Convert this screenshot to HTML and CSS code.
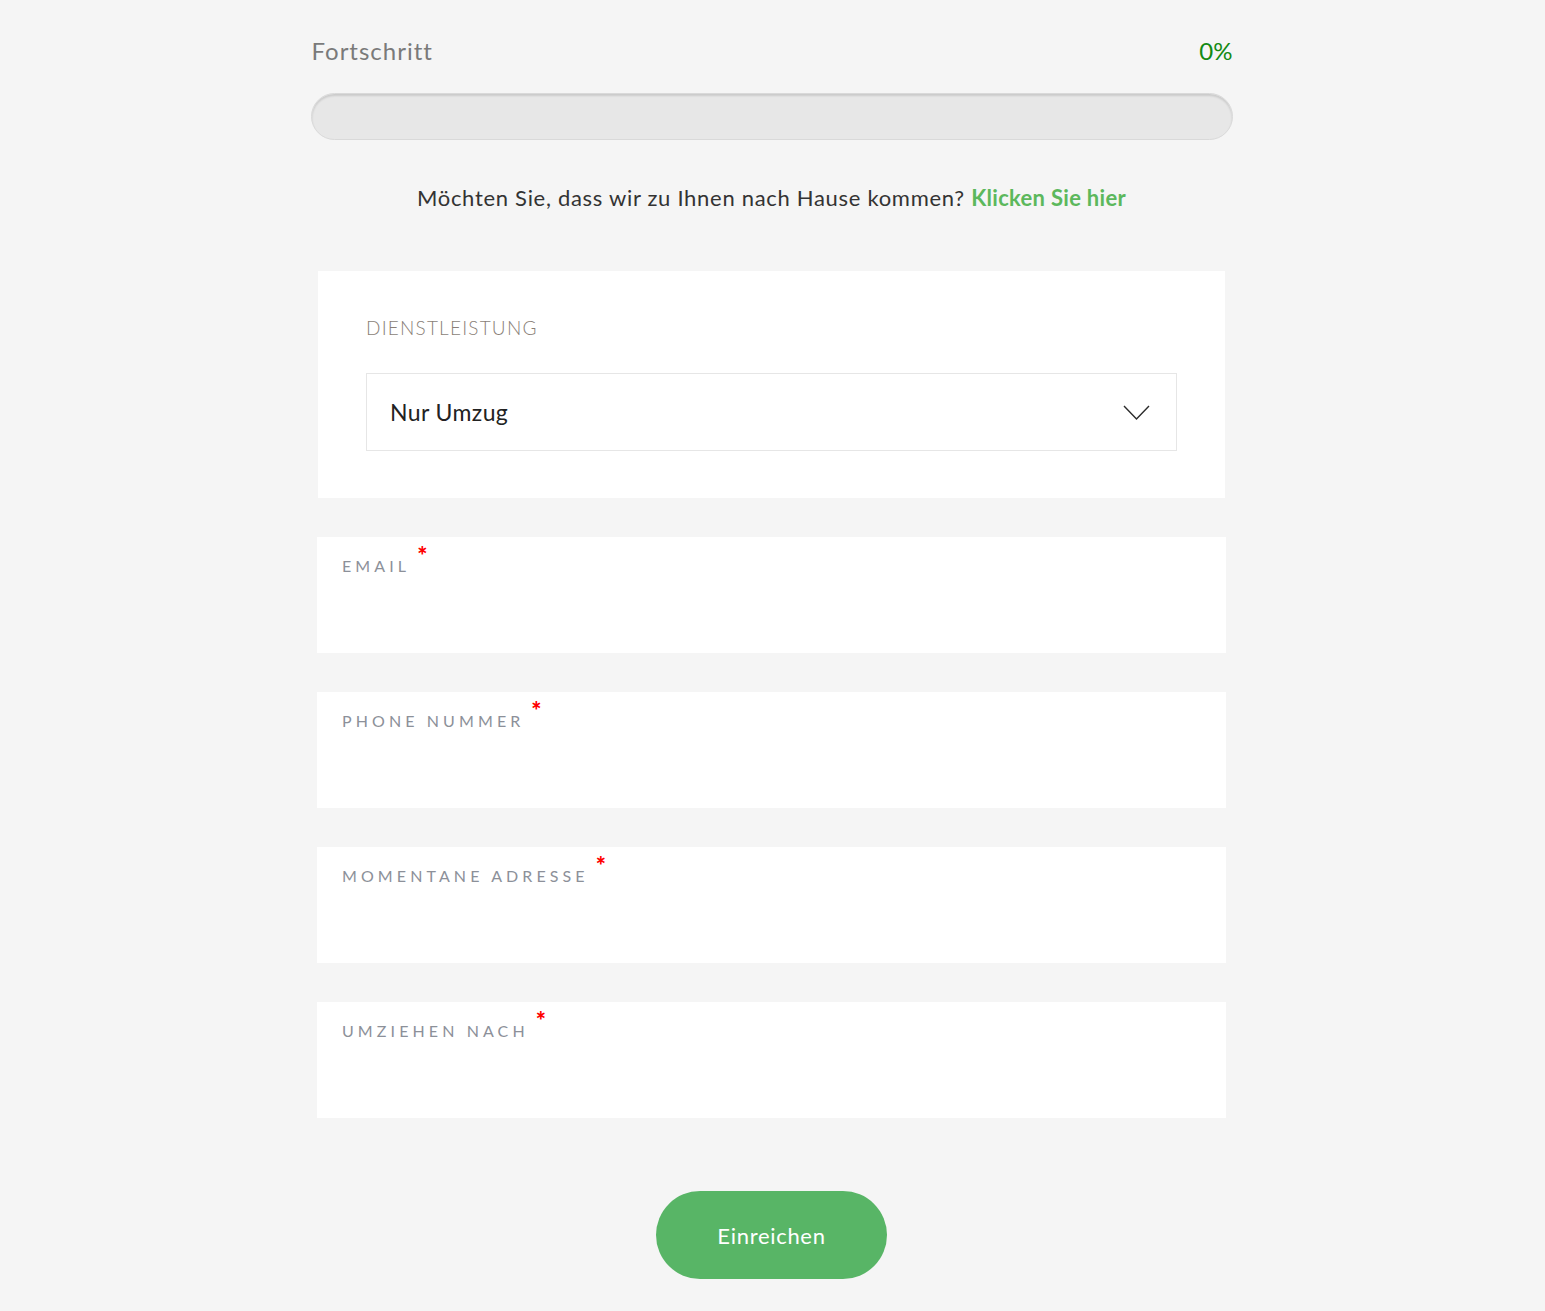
FILE: index.html
```html
<!DOCTYPE html>
<html lang="de">
<head>
<meta charset="utf-8">
<title>Formular</title>
<link rel="stylesheet" href="styles.css">
</head>
<body>
<div class="page">
  <div class="progress-head">
    <span class="progress-title">Fortschritt</span>
    <span class="progress-value">0%</span>
  </div>
  <div class="progress-bar"></div>
  <p class="home-note">Möchten Sie, dass wir zu Ihnen nach Hause kommen? <a class="home-link" href="#">Klicken Sie hier</a></p>

  <div class="service-card">
    <div class="service-label">DIENSTLEISTUNG</div>
    <div class="select">
      <span class="select-value">Nur Umzug</span>
      <svg class="chevron" width="28" height="18" viewBox="0 0 28 18"><polyline points="1,2 13.5,15 26,2" fill="none" stroke="#2b2b2b" stroke-width="1.4"/></svg>
    </div>
  </div>

  <div class="fields">
    <div class="field"><span class="field-label">EMAIL</span><span class="req">*</span></div>
    <div class="field"><span class="field-label">PHONE NUMMER</span><span class="req">*</span></div>
    <div class="field"><span class="field-label">MOMENTANE ADRESSE</span><span class="req">*</span></div>
    <div class="field"><span class="field-label">UMZIEHEN NACH</span><span class="req">*</span></div>
  </div>

  <div class="actions">
    <button class="submit" type="button">Einreichen</button>
  </div>
</div>
</body>
</html>
```

FILE: styles.css
```css
html, body {
  margin: 0;
  padding: 0;
  background: #f5f5f5;
}
body {
  font-family: Lato, "Open Sans", Arial, sans-serif;
}
.page {
  width: 922px;
  margin: 0 0 0 calc(50% - 462px);
  padding: 36px 0 32px;
  display: flex;
  flex-direction: column;
}
.progress-head {
  display: flex;
  justify-content: space-between;
  align-items: center;
  height: 28px;
  padding: 0 0 0 1px;
}
.progress-title {
  font-size: 24px;
  letter-spacing: 1px;
  color: #7a7a7a;
}
.progress-value {
  font-size: 24px;
  color: #138a13;
}
.progress-bar {
  margin-top: 29px;
  height: 45px;
  border: 1px solid #d9d9d9;
  border-radius: 24px;
  background: #e7e7e7;
  box-shadow: inset 0 2px 2px rgba(0,0,0,0.12);
}
.home-note {
  margin: 44px 0 0;
  text-align: center;
  font-size: 22px;
  line-height: 28px;
  color: #333;
  letter-spacing: 0.7px;
}
.home-link {
  color: #5cb85c;
  font-weight: 700;
  text-decoration: none;
  letter-spacing: 0.3px;
}
.service-card {
  margin: 59px auto 0;
  width: 907px;
  box-sizing: border-box;
  background: #fff;
  padding: 45px 48px 47px;
}
.service-label {
  font-size: 19px;
  line-height: 24px;
  font-weight: 300;
  letter-spacing: 1.2px;
  color: #8a7f78;
}
.select {
  margin-top: 33px;
  height: 78px;
  box-sizing: border-box;
  border: 1px solid #e6e6e6;
  display: flex;
  align-items: center;
  justify-content: space-between;
  padding: 0 25px 0 23px;
}
.select-value {
  font-size: 23px;
  letter-spacing: 0.4px;
  color: #222;
}
.chevron {
  display: block;
  margin-top: 2px;
}
.fields {
  margin: 39px auto 0;
  width: 909px;
  display: flex;
  flex-direction: column;
  gap: 39px;
}
.field {
  height: 116px;
  box-sizing: border-box;
  background: #fff;
  padding: 19px 25px 0;
  display: flex;
  align-items: flex-start;
}
.field-label {
  font-size: 16px;
  line-height: 20px;
  letter-spacing: 4.1px;
  color: #8c9099;
}
.req {
  color: #f00;
  font-size: 24px;
  font-weight: 900;
  line-height: 20px;
  margin-left: 7px;
  margin-top: -10px;
}
.actions {
  display: flex;
  justify-content: center;
  margin-top: 73px;
}
.submit {
  width: 231px;
  height: 88px;
  border: none;
  border-radius: 44px;
  background: #58b566;
  color: #fff;
  font-family: Lato, "Open Sans", Arial, sans-serif;
  font-size: 22px;
  letter-spacing: 0.7px;
  cursor: pointer;
}
```
